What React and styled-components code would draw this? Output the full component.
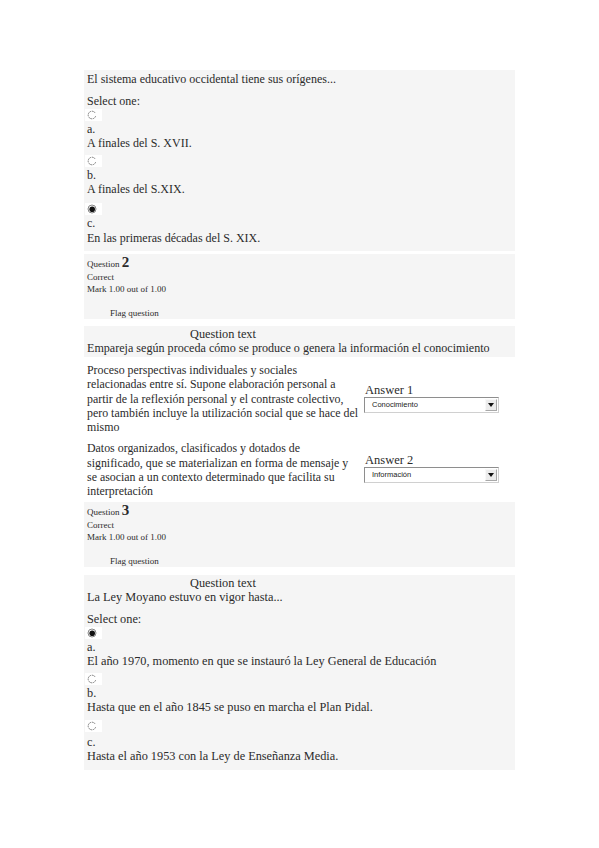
import React from 'react'
import styled, { createGlobalStyle } from 'styled-components'

const GlobalStyle = createGlobalStyle`
  html, body {
    margin: 0;
    padding: 0;
    background: #ffffff;
  }
  body {
    font-family: "Liberation Serif", "Times New Roman", serif;
    color: #2b2b2b;
  }
`

const Page = styled.div`
  width: 431px;
  margin-left: 84px;
  padding-top: 70px;
  padding-bottom: 60px;
`

const Panel = styled.div`
  background: #f5f5f5;
  padding: ${p => p.$pad || '2px 3px 5px'};
  font-size: ${p => p.$size || 12}px;
  line-height: ${p => p.$lh || 14}px;
  margin-bottom: ${p => p.$mb || 0}px;
`

const Line = styled.div`
  margin-top: ${p => p.$mt || 0}px;
  white-space: nowrap;
`

const QLabel = styled.div`
  background: #f5f5f5;
  margin-left: 99px;
  padding-left: 4px;
  margin-right: -3px;
  font-size: 12.3px;
`

const QTextLead = styled.div`
  white-space: nowrap;
  font-size: 12.1px;
`

const RadioBox = styled.div`
  width: 17px;
  height: 12px;
  background: #ffffff;
  margin-top: ${p => p.$mt || 0}px;
  margin-bottom: ${p => p.$mb || 1}px;
  margin-left: -2px;
  display: flex;
  align-items: center;
  padding-left: 2px;
  box-sizing: border-box;
`

const Info = styled.div`
  background: #f5f5f5;
  padding: 1px 3px 0;
  height: 65px;
  box-sizing: border-box;
  font-size: 9px;
  line-height: 12px;
  margin-bottom: ${p => p.$mb || 7}px;
`

const QNo = styled.div`
  line-height: 14px;
  span {
    font-size: 15px;
    font-weight: bold;
  }
`

const Flag = styled.div`
  margin-top: 12px;
  padding-left: 23px;
`

const MatchTable = styled.div`
  display: grid;
  grid-template-columns: 277px 136px;
  row-gap: 7px;
  padding: 6px 3px 3px;
  font-size: 11.9px;
  line-height: 14.3px;
`

const MatchText = styled.div`
  white-space: nowrap;
`

const AnswerCell = styled.div`
  align-self: center;
  padding-bottom: ${p => p.$pb || 0}px;
`

const AnswerLabel = styled.div`
  font-size: 12.5px;
  line-height: 14px;
  padding-left: 1px;
`

const Select = styled.div`
  width: 135px;
  height: 16px;
  box-sizing: border-box;
  border: 1px solid #8e8e8e;
  border-right-color: #d0d0d0;
  border-bottom-color: #d0d0d0;
  background: #ffffff;
  display: flex;
  align-items: center;
  justify-content: space-between;
  font-family: "Liberation Sans", Arial, sans-serif;
  font-size: 7.5px;
  color: #222;
  padding-left: 7px;
`

const Arrow = styled.div`
  width: 12px;
  height: 12px;
  margin-right: 1px;
  background: #ececec;
  border: 1px solid #a8a8a8;
  border-top-color: #f8f8f8;
  border-left-color: #f8f8f8;
  box-sizing: border-box;
  display: flex;
  align-items: center;
  justify-content: center;
`

const Radio = ({ checked }) => (
  <svg width="10" height="10" viewBox="0 0 10 10">
    {checked ? (
      <>
        <circle cx="5" cy="5" r="4" fill="none" stroke="#888" strokeWidth="1" />
        <circle cx="5.2" cy="5.2" r="2.8" fill="#111" />
      </>
    ) : (
      <path d="M8.6 6.2 A3.8 3.8 0 1 1 8.2 3" fill="none" stroke="#7a7a7a" strokeWidth="1" strokeDasharray="1.6 0.7" />
    )}
  </svg>
)

const DropArrow = () => (
  <svg width="6" height="4" viewBox="0 0 6 4">
    <path d="M0 0 H6 L3 4 Z" fill="#111" />
  </svg>
)

const Option = ({ letter, text, checked, mt, below, gap }) => (
  <>
    <RadioBox $mt={mt} $mb={below}>
      <Radio checked={checked} />
    </RadioBox>
    <Line>{letter}</Line>
    <Line $mt={gap}>{text}</Line>
  </>
)

const QuestionInfo = ({ n, mb }) => (
  <Info $mb={mb}>
    <QNo>Question <span>{n}</span></QNo>
    <div>Correct</div>
    <div>Mark 1.00 out of 1.00</div>
    <Flag>Flag question</Flag>
  </Info>
)

export default function App() {
  return (
    <>
      <GlobalStyle />
      <Page>
        <Panel $pad="2px 3px 6px" $mb={3}>
          <Line>El sistema educativo occidental tiene sus orígenes...</Line>
          <Line $mt={8}>Select one:</Line>
          <Option letter="a." text="A finales del S. XVII." mt={1} />
          <Option letter="b." text="A finales del S.XIX." mt={5} />
          <Option letter="c." text="En las primeras décadas del S. XIX." checked mt={7} gap={1} />
        </Panel>

        <QuestionInfo n="2" mb={7} />

        <Panel $pad="1px 3px 2px" $size={12.3} $lh={14}>
          <QLabel>Question text</QLabel>
          <QTextLead>Empareja según proceda cómo se produce o genera la información el conocimiento</QTextLead>
        </Panel>

        <MatchTable>
          <MatchText>
            Proceso perspectivas individuales y sociales<br />
            relacionadas entre sí. Supone elaboración personal a<br />
            partir de la reflexión personal y el contraste colectivo,<br />
            pero también incluye la utilización social que se hace del<br />
            mismo
          </MatchText>
          <AnswerCell $pb={1}>
            <AnswerLabel>Answer 1</AnswerLabel>
            <Select>
              Conocimiento
              <Arrow><DropArrow /></Arrow>
            </Select>
          </AnswerCell>
          <MatchText>
            Datos organizados, clasificados y dotados de<br />
            significado, que se materializan en forma de mensaje y<br />
            se asocian a un contexto determinado que facilita su<br />
            interpretación
          </MatchText>
          <AnswerCell $pb={4}>
            <AnswerLabel>Answer 2</AnswerLabel>
            <Select>
              Información
              <Arrow><DropArrow /></Arrow>
            </Select>
          </AnswerCell>
        </MatchTable>

        <QuestionInfo n="3" mb={8} />

        <Panel $pad="1px 3px 6px" $size={12.3} $lh={14.2}>
          <QLabel>Question text</QLabel>
          <Line>La Ley Moyano estuvo en vigor hasta...</Line>
          <Line $mt={8}>Select one:</Line>
          <Option letter="a." text="El año 1970, momento en que se instauró la Ley General de Educación" checked mt={1} />
          <Option letter="b." text="Hasta que en el año 1845 se puso en marcha el Plan Pidal." mt={4} />
          <Option letter="c." text="Hasta el año 1953 con la Ley de Enseñanza Media." mt={6} below={3} />
        </Panel>
      </Page>
    </>
  )
}
